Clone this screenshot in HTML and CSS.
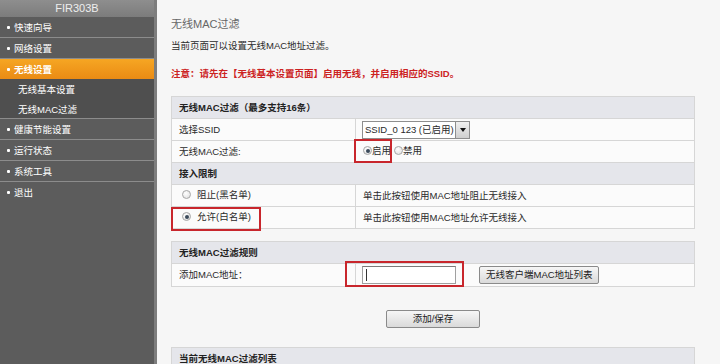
FILE: index.html
```html
<!DOCTYPE html>
<html lang="zh-CN">
<head>
<meta charset="utf-8">
<title>无线MAC过滤</title>
<link rel="stylesheet" href="styles.css">
</head>
<body>
<div class="page">
  <nav class="sidebar">
    <div class="brand">FIR303B</div>
    <ul class="menu">
      <li class="item sep">快速向导</li>
      <li class="item sep">网络设置</li>
      <li class="item active">无线设置</li>
      <li class="sub">无线基本设置</li>
      <li class="sub sep sub-last">无线MAC过滤</li>
      <li class="item sep">健康节能设置</li>
      <li class="item sep">运行状态</li>
      <li class="item sep">系统工具</li>
      <li class="item">退出</li>
    </ul>
  </nav>
  <main class="content">
    <h1 class="title">无线MAC过滤</h1>
    <p class="desc">当前页面可以设置无线MAC地址过滤。</p>
    <p class="note">注意：请先在【无线基本设置页面】启用无线，并启用相应的SSID。</p>

    <table class="tbl">
      <tr class="head"><td colspan="2">无线MAC过滤（最多支持16条）</td></tr>
      <tr>
        <td class="c1">选择SSID</td>
        <td class="c2">
          <div class="select"><span class="select-text">SSID_0 123 (已启用)</span><span class="select-btn"><span class="tri"></span></span></div>
        </td>
      </tr>
      <tr>
        <td class="c1">无线MAC过滤:</td>
        <td class="c2 rel">
          <span class="opt"><span class="radio checked"></span>启用</span><span class="opt"><span class="radio"></span>禁用</span>
          <span class="mark mark-enable"></span>
        </td>
      </tr>
      <tr class="head"><td colspan="2">接入限制</td></tr>
      <tr>
        <td class="c1 pad"><span class="opt"><span class="radio"></span>阻止(黑名单)</span></td>
        <td class="c2">单击此按钮使用MAC地址阻止无线接入</td>
      </tr>
      <tr>
        <td class="c1 pad rel"><span class="opt"><span class="radio checked"></span>允许(白名单)</span><span class="mark mark-allow"></span></td>
        <td class="c2">单击此按钮使用MAC地址允许无线接入</td>
      </tr>
    </table>

    <table class="tbl tbl2">
      <tr class="head"><td colspan="2">无线MAC过滤规则</td></tr>
      <tr class="tall">
        <td class="c1">添加MAC地址：</td>
        <td class="c2 rel">
          <span class="field"><span class="caret"></span></span><button class="btn btn-list" type="button">无线客户端MAC地址列表</button>
          <span class="mark mark-mac"></span>
        </td>
      </tr>
    </table>

    <div class="actions"><button class="btn btn-save" type="button">添加/保存</button></div>

    <table class="tbl">
      <tr class="head"><td colspan="2">当前无线MAC过滤列表</td></tr>
    </table>
  </main>
</div>
</body>
</html>
```

FILE: styles.css
```css
* { box-sizing: border-box; }
html, body { margin: 0; padding: 0; }
body {
  font-family: "Liberation Sans", "Noto Sans CJK SC", sans-serif;
  font-size: 9.5px;
  color: #2a2a2a;
  background: #f6f6f6;
  overflow: hidden;
}
.page {
  display: flex;
  min-height: 364px;
}
.sidebar {
  width: 157px;
  flex: none;
  background: #5c5c5c;
  border-right: 3px solid #7d7d7d;
}
.brand {
  height: 17px;
  line-height: 17px;
  text-align: center;
  color: #eee;
  font-size: 11px;
  background: linear-gradient(#8e8e8e, #7c7c7c);
}
.menu {
  list-style: none;
  margin: 0;
  padding: 0;
}
.item, .sub {
  height: 20px;
  color: #fff;
  display: flex;
  align-items: center;
  white-space: nowrap;
}
.item { padding-left: 7px; background: #5c5c5c; }
.item::before {
  content: "";
  width: 3px;
  height: 3px;
  border-radius: 1px;
  background: #fff;
  margin-right: 4px;
}
.sep { height: 21px; border-bottom: 1px solid #8c8c8c; }
.item.active {
  background: linear-gradient(#f6a623, #ea8b14);
  font-weight: bold;
}
.sub {
  padding-left: 18px;
  background: #4f4f4f;
}
.sub-last { height: 20px; }
.content {
  flex: 1;
  padding: 17px 25px 0 14px;
}
.title {
  margin: 0 0 8px;
  height: 14px;
  line-height: 14px;
  font-size: 11px;
  font-weight: normal;
  color: #666;
}
.desc {
  margin: 0 0 14px;
  height: 14px;
  line-height: 14px;
}
.note {
  margin: 0 0 15px;
  height: 14px;
  line-height: 14px;
  color: #cc2222;
  font-weight: bold;
}
.tbl {
  width: 524px;
  border-collapse: collapse;
  border: 1px solid #d6d6d6;
  background: #fbfbfb;
}
.tbl td {
  height: 22px;
  padding: 0 7px;
  border-top: 1px solid #d6d6d6;
  vertical-align: middle;
  white-space: nowrap;
  line-height: 14px;
}
.tbl .head td {
  background: #e5e6eb;
  font-weight: bold;
  color: #222;
}
.tbl .c1 { width: 184px; border-right: 1px solid #d6d6d6; }
.tbl .c2 { padding-left: 7px; }
.tbl .pad { padding-left: 10px; }
.tbl .tall td { height: 23px; }
.tbl2 { margin-top: 12px; }
.rel { position: relative; }

.opt {
  display: inline-flex;
  align-items: center;
}
.opt + .opt { margin-left: 3px; }
.radio {
  width: 9px;
  height: 9px;
  border-radius: 50%;
  border: 1px solid #a8a8a8;
  background: radial-gradient(circle at 40% 35%, #ffffff, #dcdcdc);
  margin-right: 0;
  position: relative;
}
.pad .radio { margin-right: 6px; }
.radio.checked::after {
  content: "";
  position: absolute;
  left: 1.5px;
  top: 1.5px;
  width: 4px;
  height: 4px;
  border-radius: 50%;
  background: #3a4a5a;
}

.select {
  display: inline-flex;
  align-items: stretch;
  height: 18px;
  width: 108px;
  margin-left: -1px;
  border: 1px solid #8e8e8e;
  background: #fff;
  vertical-align: middle;
}
.select-text {
  flex: 1;
  line-height: 16px;
  padding-left: 2px;
}
.select-btn {
  width: 14px;
  border-left: 1px solid #8e8e8e;
  background: linear-gradient(#f0f0f0, #cfcfcf);
  display: flex;
  align-items: center;
  justify-content: center;
}
.tri {
  width: 0;
  height: 0;
  border-left: 3px solid transparent;
  border-right: 3px solid transparent;
  border-top: 4px solid #111;
}

.field {
  display: inline-block;
  width: 94px;
  height: 18px;
  margin-left: -1px;
  border: 1px solid #a0a0a0;
  border-top-color: #7a7a7a;
  background: #fff;
  vertical-align: middle;
  position: relative;
}
.caret {
  position: absolute;
  left: 3px;
  top: 2px;
  width: 1px;
  height: 12px;
  background: #333;
}
.btn {
  font-family: inherit;
  font-size: 9.5px;
  color: #222;
  height: 18px;
  padding: 0 6px;
  border: 1px solid #8a8a8a;
  border-radius: 2px;
  background: linear-gradient(#f6f6f6, #dadada);
  line-height: 16px;
  vertical-align: middle;
}
.btn-list { margin-left: 23px; width: 120px; }
.actions {
  width: 524px;
  text-align: center;
  margin: 23px 0 19px;
  height: 18px;
}
.btn-save { width: 94px; display: inline-block; }

.mark {
  position: absolute;
  border: 2px solid #c8262c;
  pointer-events: none;
}
.mark-enable { left: -2px; top: -2px; width: 38px; height: 24px; }
.mark-allow { left: -1px; top: 0; width: 90px; height: 24px; }
.mark-mac { left: -11px; top: -3px; width: 119px; height: 26px; }
```
